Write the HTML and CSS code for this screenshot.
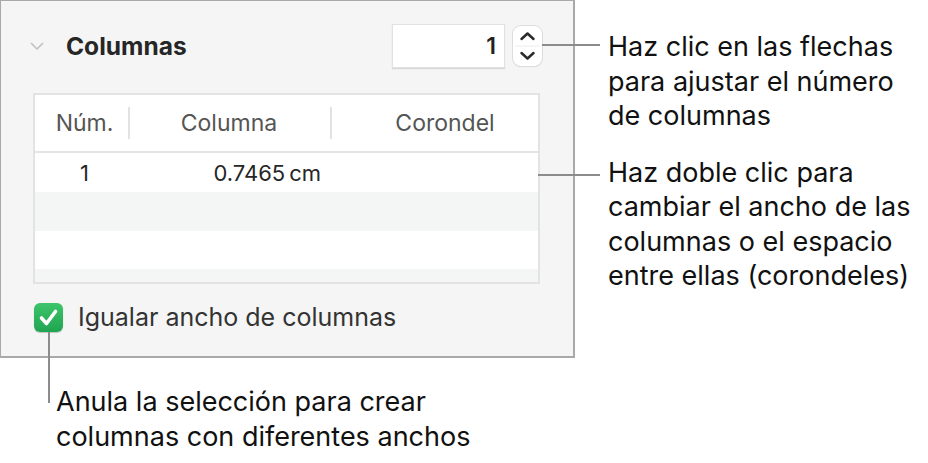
FILE: index.html
```html
<!DOCTYPE html>
<html lang="es">
<head>
  <meta charset="UTF-8">
  <meta name="viewport" content="width=device-width, initial-scale=1.0">
  <title>Columnas</title>
  <link rel="stylesheet" href="styles.css">
</head>
<body>
  <div class="page">
    <div class="panel">
      <div class="panel-head">
        <svg class="chevron" width="14" height="9" viewBox="0 0 14 9">
          <path d="M1.5 1.5 L7 7 L12.5 1.5" fill="none" stroke="#c2c2c2" stroke-width="1.7" stroke-linecap="round" stroke-linejoin="round"/>
        </svg>
        <span class="panel-title">Columnas</span>
        <div class="count">1</div>
        <div class="stepper">
          <svg width="29" height="40" viewBox="0 0 29 40">
            <path d="M8.5 13 L14.5 7.5 L20.5 13" fill="none" stroke="#2b2b2b" stroke-width="2.5" stroke-linecap="round" stroke-linejoin="round"/>
            <line x1="2" y1="20" x2="27" y2="20" stroke="#ececec" stroke-width="1"/>
            <path d="M8.5 27 L14.5 32.5 L20.5 27" fill="none" stroke="#2b2b2b" stroke-width="2.5" stroke-linecap="round" stroke-linejoin="round"/>
          </svg>
        </div>
      </div>

      <div class="cols-box">
        <table class="cols">
          <colgroup>
            <col class="c-num">
            <col class="c-col">
            <col class="c-gap">
          </colgroup>
          <tr>
            <th class="th-num">Núm.</th>
            <th>Columna</th>
            <th class="th-gap">Corondel</th>
          </tr>
          <tr>
            <td class="num">1</td>
            <td class="width">0.7465&#8201;cm</td>
            <td></td>
          </tr>
          <tr class="alt"><td></td><td></td><td></td></tr>
          <tr class="low"><td></td><td></td><td></td></tr>
          <tr class="alt short"><td></td><td></td><td></td></tr>
        </table>
      </div>

      <label class="equal">
        <span class="check">
          <svg width="29" height="29" viewBox="0 0 29 29">
            <path d="M7.5 15 L12.5 20.5 L21.5 8.5" fill="none" stroke="#fff" stroke-width="3.6" stroke-linecap="round" stroke-linejoin="round"/>
          </svg>
        </span>
        Igualar ancho de columnas
      </label>
    </div>

    <div class="notes">
      <p class="note note-arrows">Haz clic en las flechas<br>para ajustar el número<br>de columnas</p>
      <p class="note note-table">Haz doble clic para<br>cambiar el ancho de las<br>columnas o el espacio<br>entre ellas (corondeles)</p>
    </div>

    <p class="note note-check">Anula la selección para crear<br>columnas con diferentes anchos</p>
  </div>
</body>
</html>
```

FILE: styles.css
```css
body {
    margin: 0;
    font-family: Inter, "Noto Sans", sans-serif;
    background: #fff;
    color: #1d1d1d;
}

.page {
    display: grid;
    grid-template-columns: 575px 1fr;
    column-gap: 33px;
}

/* panneau gris */
.panel {
    box-sizing: border-box;
    width: 575px;
    height: 358px;
    background: #f5f5f5;
    border: 2px solid #a9a9a9;
    border-top-width: 1px;
    border-left-width: 1px;
    padding: 23px 33px 0 32px;
}

.panel-head {
    display: flex;
    align-items: center;
    height: 44px;
}

.chevron {
    margin-left: -3px;
    margin-right: 22px;
}

.panel-title {
    font-size: 24.5px;
    font-weight: 700;
    color: #262626;
}

.count {
    margin-left: auto;
    box-sizing: border-box;
    width: 113px;
    height: 44px;
    background: #fff;
    border: 1px solid #e2e2e2;
    box-shadow: 0 1px 1px rgba(0, 0, 0, 0.12);
    text-align: right;
    padding-right: 8px;
    font-size: 23px;
    font-weight: 600;
    line-height: 42px;
    color: #222;
}

.stepper {
    position: relative;
    box-sizing: border-box;
    width: 29px;
    height: 40px;
    margin-left: 8px;
    margin-right: -2px;
    background: #fff;
    border-radius: 8px;
    box-shadow: 0 0 0 1px #dcdcdc, 0 1px 1px rgba(0, 0, 0, 0.15);
}

.stepper svg {
    display: block;
}

/* traits de légende */
.stepper::after {
    content: "";
    position: absolute;
    left: 100%;
    top: 18px;
    width: 58px;
    height: 2px;
    background: #8c8c8c;
}

.cols-box {
    position: relative;
    margin-top: 25px;
    border: 2px solid #e3e3e3;
    background: #fff;
}

.cols-box::after {
    content: "";
    position: absolute;
    left: 100%;
    top: 79px;
    width: 62px;
    height: 2px;
    background: #8c8c8c;
}

.cols {
    width: 100%;
    border-collapse: collapse;
    table-layout: fixed;
}

.c-num { width: 93px; }
.c-col { width: 202px; }

.cols th {
    height: 56px;
    font-size: 23px;
    font-weight: 400;
    color: #555;
    text-align: center;
    border-bottom: 2px solid #e4e4e4;
    padding: 0;
}

.cols th + th {
    background: linear-gradient(#e2e2e2, #e2e2e2) left center / 2px 32px no-repeat;
}

.cols .th-num {
    padding-left: 6px;
}

.cols .th-gap {
    padding-left: 22px;
}

.cols td {
    height: 39px;
    padding: 0;
    font-size: 22px;
    color: #262626;
}

.cols tr.low td {
    height: 38px;
}

.cols tr.short td {
    height: 13px;
}

.cols td.num {
    text-align: center;
    padding-left: 6px;
}

.cols td.width {
    text-align: right;
    padding-right: 9px;
}

.cols tr.alt td {
    background: #f4f5f5;
}

.equal {
    display: flex;
    align-items: center;
    margin-top: 18px;
    margin-left: 1px;
    font-size: 25px;
    color: #333;
}

.check {
    position: relative;
    width: 29px;
    height: 29px;
    margin-right: 15px;
    border-radius: 6px;
    background: linear-gradient(#3ec46a, #1fa451);
    box-shadow: 0 1px 1px rgba(0, 0, 0, 0.2);
}

.check svg {
    display: block;
}

.check::after {
    content: "";
    position: absolute;
    top: 100%;
    left: 14px;
    width: 2px;
    height: 71px;
    background: #8c8c8c;
}

/* textes explicatifs */
.note {
    margin: 0;
    font-size: 27px;
    line-height: 34.5px;
    color: #111;
}

.note-arrows {
    margin-top: 30px;
}

.note-table {
    margin-top: 22px;
}

.note-check {
    grid-column: 1 / -1;
    margin-top: 27px;
    padding-left: 56px;
}
```
